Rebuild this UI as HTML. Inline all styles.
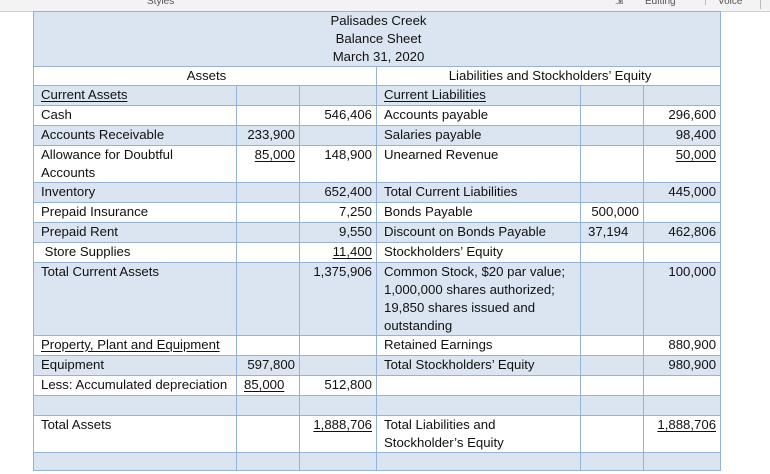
<!DOCTYPE html>
<html><head><meta charset="utf-8"><style>
body{margin:0;width:770px;height:474px;background:#fff;position:relative;overflow:hidden;font-family:"Liberation Sans",sans-serif;font-size:13.2px;color:#111;}
.bar{position:absolute;left:0;top:0;width:770px;height:11px;background:#f3f3f3;border-bottom:1px solid #d0d0d0;font-size:10px;color:#555;line-height:6px;overflow:hidden}
.bar span{position:absolute;top:-1px}
table{position:absolute;left:33px;top:11px;border-collapse:collapse;table-layout:fixed;width:687px}
td{border:1px solid #95b3d7;padding:0 4px 0 7px;vertical-align:top;line-height:18px;white-space:nowrap;overflow:hidden}
tr{height:20px}
.b td{background:#dbe5f1}
.w td{background:#fff}
.r{text-align:right;padding-right:4px}
.c{text-align:center}
u{text-decoration:underline;text-underline-offset:2px}
</style></head><body>
<div class="bar"><span style="left:147px">Styles</span><span style="left:615px">⇲</span><span style="left:645px">Editing</span><span style="left:705px;border-left:1px solid #bbb;padding-left:12px">Voice</span><span style="left:760px;border-left:1px solid #bbb;height:10px"></span></div>
<table>
<colgroup><col style="width:203px"><col style="width:63px"><col style="width:77px"><col style="width:204px"><col style="width:63px"><col style="width:77px"></colgroup>
<tr class="b" style="height:52px"><td colspan="6" class="c" style="padding-top:0">Palisades Creek<br>Balance Sheet<br>March 31, 2020</td></tr>
<tr class="w" style="height:19px"><td colspan="3" class="c">Assets</td><td colspan="3" class="c">Liabilities and Stockholders’ Equity</td></tr>
<tr class="b"><td><u>Current Assets</u></td><td></td><td></td><td><u>Current Liabilities</u></td><td></td><td></td></tr>
<tr class="w"><td>Cash</td><td></td><td class="r">546,406</td><td>Accounts payable</td><td></td><td class="r">296,600</td></tr>
<tr class="b"><td>Accounts Receivable</td><td class="r">233,900</td><td></td><td>Salaries payable</td><td></td><td class="r">98,400</td></tr>
<tr class="w" style="height:34px"><td>Allowance for Doubtful<br>Accounts</td><td class="r"><u>85,000</u></td><td class="r">148,900</td><td>Unearned Revenue</td><td></td><td class="r"><u>50,000</u></td></tr>
<tr class="b"><td>Inventory</td><td></td><td class="r">652,400</td><td>Total Current Liabilities</td><td></td><td class="r">445,000</td></tr>
<tr class="w"><td>Prepaid Insurance</td><td></td><td class="r">7,250</td><td>Bonds Payable</td><td class="r">500,000</td><td></td></tr>
<tr class="b"><td>Prepaid Rent</td><td></td><td class="r">9,550</td><td>Discount on Bonds Payable</td><td>37,194</td><td class="r">462,806</td></tr>
<tr class="w"><td>&nbsp;Store Supplies</td><td></td><td class="r"><u>11,400</u></td><td>Stockholders’ Equity</td><td></td><td></td></tr>
<tr class="b" style="height:72px"><td>Total Current Assets</td><td></td><td class="r">1,375,906</td><td>Common Stock, $20 par value;<br>1,000,000 shares authorized;<br>19,850 shares issued and<br>outstanding</td><td></td><td class="r">100,000</td></tr>
<tr class="w"><td><u>Property, Plant and Equipment</u></td><td></td><td></td><td>Retained Earnings</td><td></td><td class="r">880,900</td></tr>
<tr class="b"><td>Equipment</td><td class="r">597,800</td><td></td><td>Total Stockholders’ Equity</td><td></td><td class="r">980,900</td></tr>
<tr class="w"><td>Less: Accumulated depreciation</td><td style="padding-left:7px"><u>85,000</u></td><td class="r">512,800</td><td></td><td></td><td></td></tr>
<tr class="b"><td></td><td></td><td></td><td></td><td></td><td></td></tr>
<tr class="w" style="height:36px"><td>Total Assets</td><td></td><td class="r"><u>1,888,706</u></td><td>Total Liabilities and<br>Stockholder’s Equity</td><td></td><td class="r"><u>1,888,706</u></td></tr>
<tr class="b" style="height:18px"><td></td><td></td><td></td><td></td><td></td><td></td></tr>
</table>
</body></html>
